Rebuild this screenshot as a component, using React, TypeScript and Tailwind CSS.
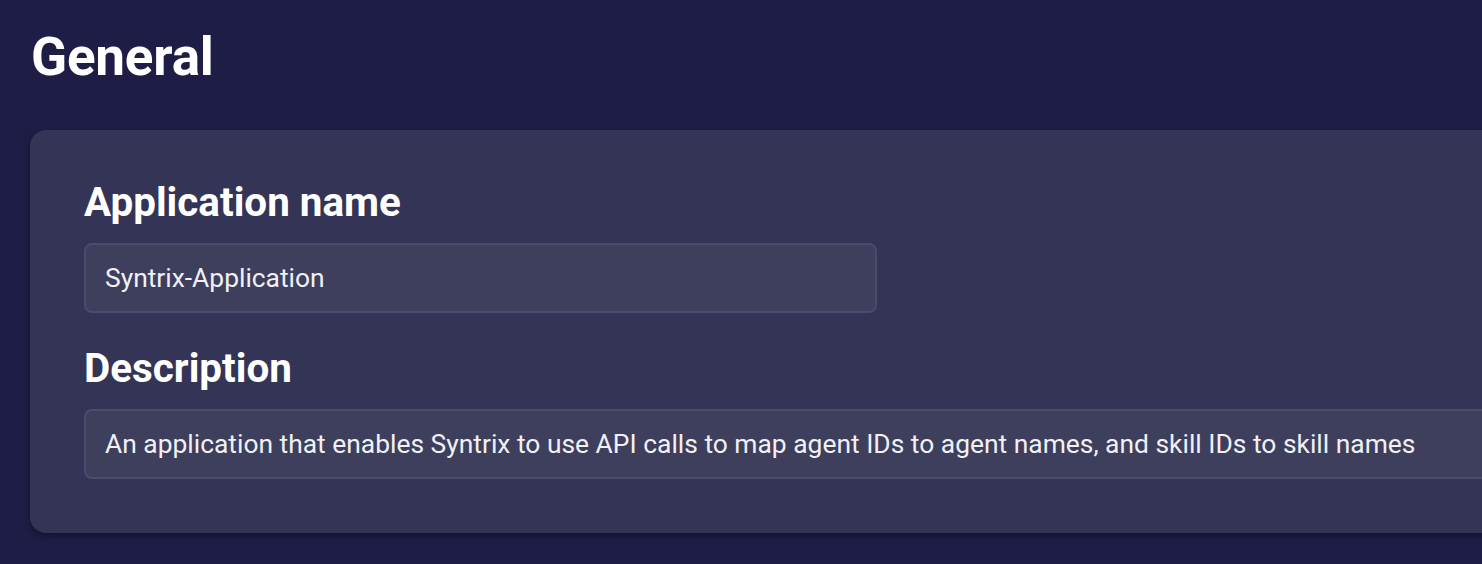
import React from "react";

export default function App() {
  return (
    <div
      className="min-h-[564px] w-full overflow-hidden bg-[#1e1d45] text-white"
      style={{ fontFamily: "Roboto, 'Noto Sans', sans-serif" }}
    >
      <div className="pl-[30px] pt-[26px]">
        <h1 className="ml-[1px] text-[53px] font-bold leading-[62px] tracking-[-0.2px]">General</h1>
        <div className="mt-[42px] w-[1500px] rounded-l-[16px] bg-[#333456] pb-[54px] pl-[54px] pt-[49px] shadow-[0_3px_6px_rgba(0,0,0,0.35)]">
          <div className="text-[40.4px] font-bold leading-[48px]">Application name</div>
          <div className="mt-[16px] flex h-[70px] w-[793px] items-center rounded-[8px] border-2 border-[#4a4c6b] bg-[#3d3f5d] px-[19px] pt-[2px] text-[26.4px] text-[#f0f0f5]">
            Syntrix-Application
          </div>
          <div className="mt-[32px] text-[40.4px] font-bold leading-[48px]">Description</div>
          <div className="mt-[16px] flex h-[70px] w-[1500px] items-center rounded-l-[8px] border-2 border-r-0 border-[#4a4c6b] bg-[#3d3f5d] px-[19px] pt-[2px] text-[26.4px] text-[#f0f0f5]">
            An application that enables Syntrix to use API calls to map agent IDs to agent names, and skill IDs to skill names
          </div>
        </div>
      </div>
    </div>
  );
}
